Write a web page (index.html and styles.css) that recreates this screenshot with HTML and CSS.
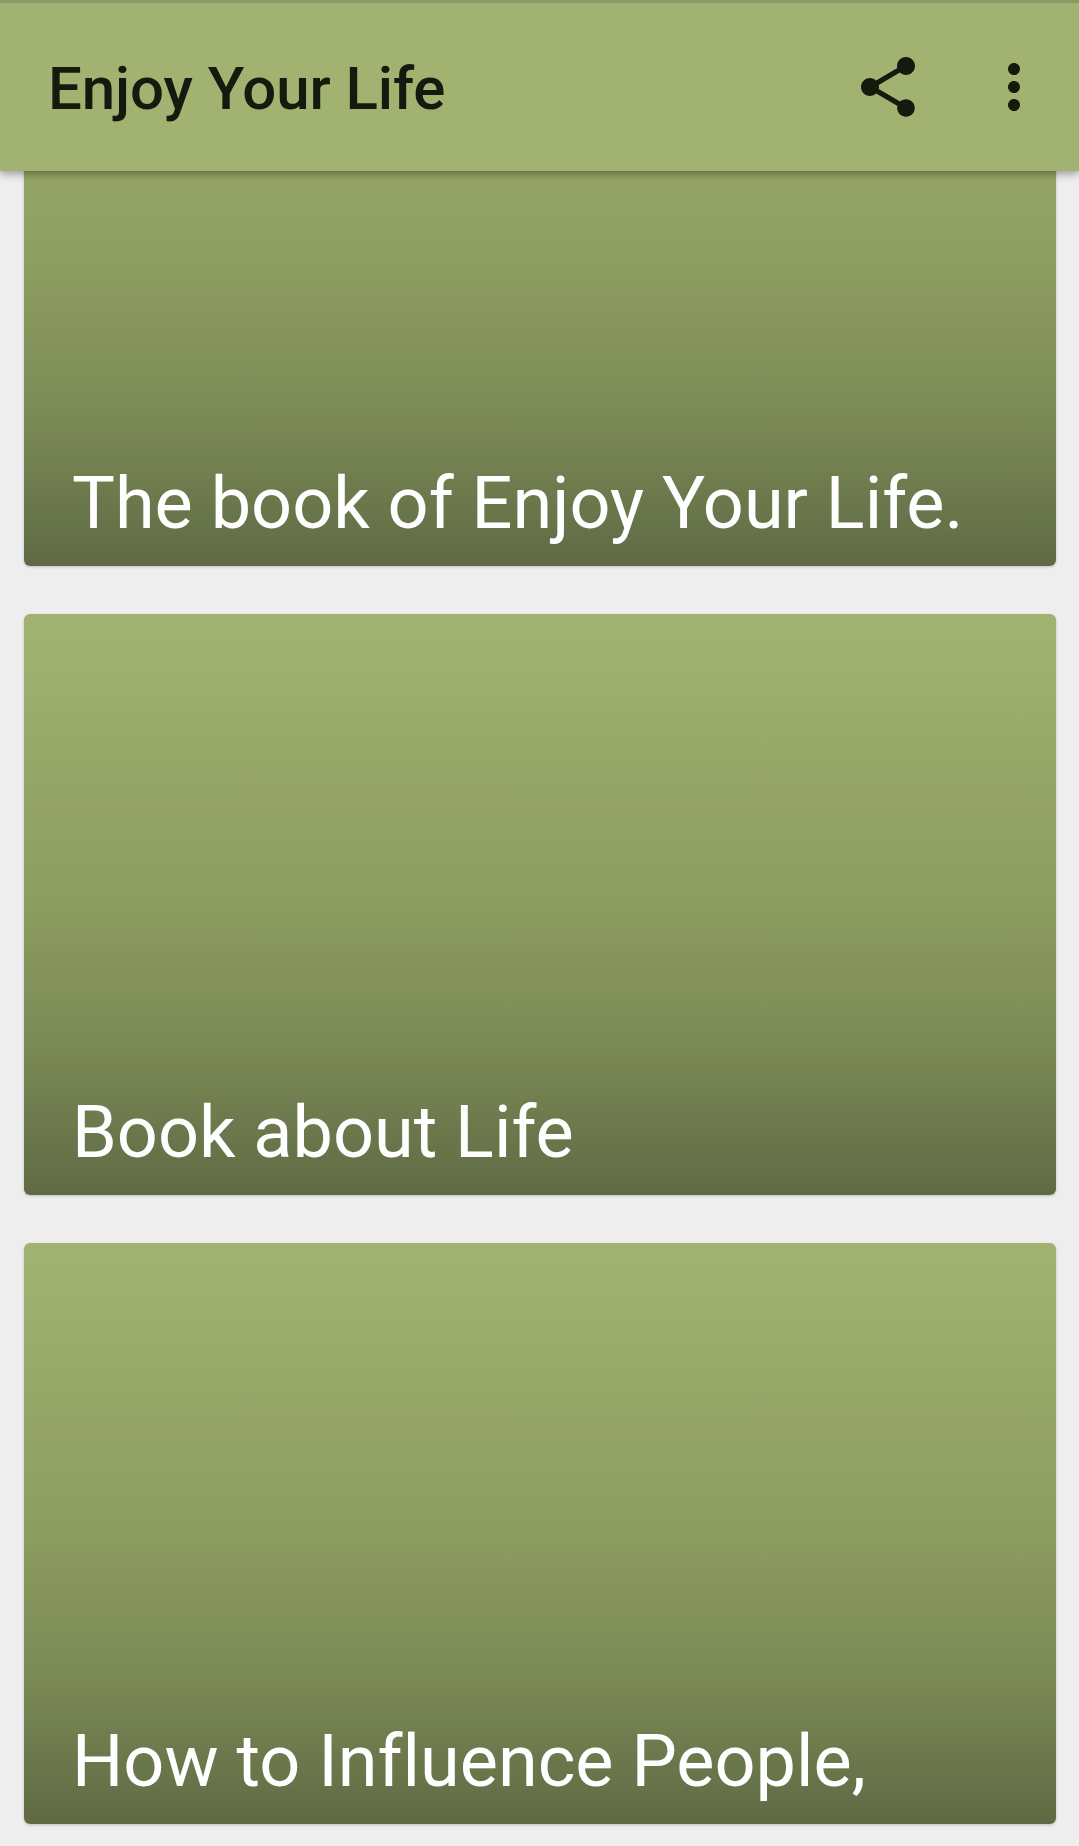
FILE: index.html
```html
<!DOCTYPE html>
<html lang="en">
<head>
<meta charset="utf-8">
<title>Enjoy Your Life</title>
<link rel="stylesheet" href="styles.css">
</head>
<body>
<div class="screen">
  <div class="status-strip"></div>
  <header class="app-bar">
    <h1 class="app-title">Enjoy Your Life</h1>
    <div class="actions">
      <svg class="icon" viewBox="0 0 24 24" aria-label="Share"><path d="M18 16.08c-.76 0-1.44.3-1.96.77L8.91 12.7c.05-.23.09-.46.09-.7s-.04-.47-.09-.7l7.05-4.11c.54.5 1.25.81 2.04.81 1.66 0 3-1.34 3-3s-1.34-3-3-3-3 1.34-3 3c0 .24.04.47.09.7L8.04 9.81C7.5 9.31 6.79 9 6 9c-1.66 0-3 1.34-3 3s1.34 3 3 3c.79 0 1.5-.31 2.04-.81l7.12 4.16c-.05.21-.08.43-.08.65 0 1.61 1.31 2.92 2.92 2.92 1.61 0 2.92-1.31 2.92-2.92s-1.31-2.92-2.92-2.92z"/></svg>
      <svg class="icon" viewBox="0 0 24 24" aria-label="More options"><path d="M12 8c1.1 0 2-.9 2-2s-.9-2-2-2-2 .9-2 2 .9 2 2 2zm0 2c-1.1 0-2 .9-2 2s.9 2 2 2 2-.9 2-2-.9-2-2-2zm0 6c-1.1 0-2 .9-2 2s.9 2 2 2 2-.9 2-2-.9-2-2-2z"/></svg>
    </div>
  </header>
  <main class="list">
    <article class="card"><h2 class="card-title">The book of Enjoy Your Life.</h2></article>
    <article class="card"><h2 class="card-title">Book about Life</h2></article>
    <article class="card"><h2 class="card-title">How to Influence People,</h2></article>
  </main>
</div>
</body>
</html>
```
FILE: styles.css
```css
* {
  box-sizing: border-box;
}

html,
body {
  margin: 0;
  padding: 0;
}

body {
  background: #eeeeee;
  font-family: Roboto, "Liberation Sans", sans-serif;
  font-variant-ligatures: none;
}

.screen {
  width: 1079px;
  height: 1846px;
  display: flex;
  flex-direction: column;
  overflow: hidden;
}

.status-strip {
  flex: none;
  position: relative;
  z-index: 3;
  height: 3px;
  background: #8a9a64;
}

.app-bar {
  flex: none;
  position: relative;
  z-index: 2;
  height: 168px;
  padding: 0 29px 0 48px;
  display: flex;
  align-items: center;
  justify-content: space-between;
  background: #a2b371;
  box-shadow: 0 3px 8px rgba(0, 0, 0, 0.35);
}

.app-title {
  margin: 4px 0 0;
  font-size: 60px;
  font-weight: 500;
  line-height: 1;
  letter-spacing: -0.1px;
  color: #141a0e;
}

.actions {
  display: flex;
  gap: 54px;
}

.icon {
  display: block;
  width: 72px;
  height: 72px;
  fill: #141a0e;
}

.list {
  flex: none;
  margin-top: -186px;
  padding: 0 23px 0 24px;
  display: flex;
  flex-direction: column;
  gap: 48px;
}

.card {
  height: 581px;
  padding: 0 48px 20px;
  display: flex;
  align-items: flex-end;
  border-radius: 6px;
  background: linear-gradient(to bottom, #a2b371 0%, #8d9c60 50%, #7b8955 75%, #5f6a44 100%);
  box-shadow: 0 1px 3px rgba(0, 0, 0, 0.2);
}

.card-title {
  margin: 0;
  font-size: 72px;
  font-weight: 400;
  line-height: 84px;
  color: #ffffff;
  white-space: nowrap;
}
```
